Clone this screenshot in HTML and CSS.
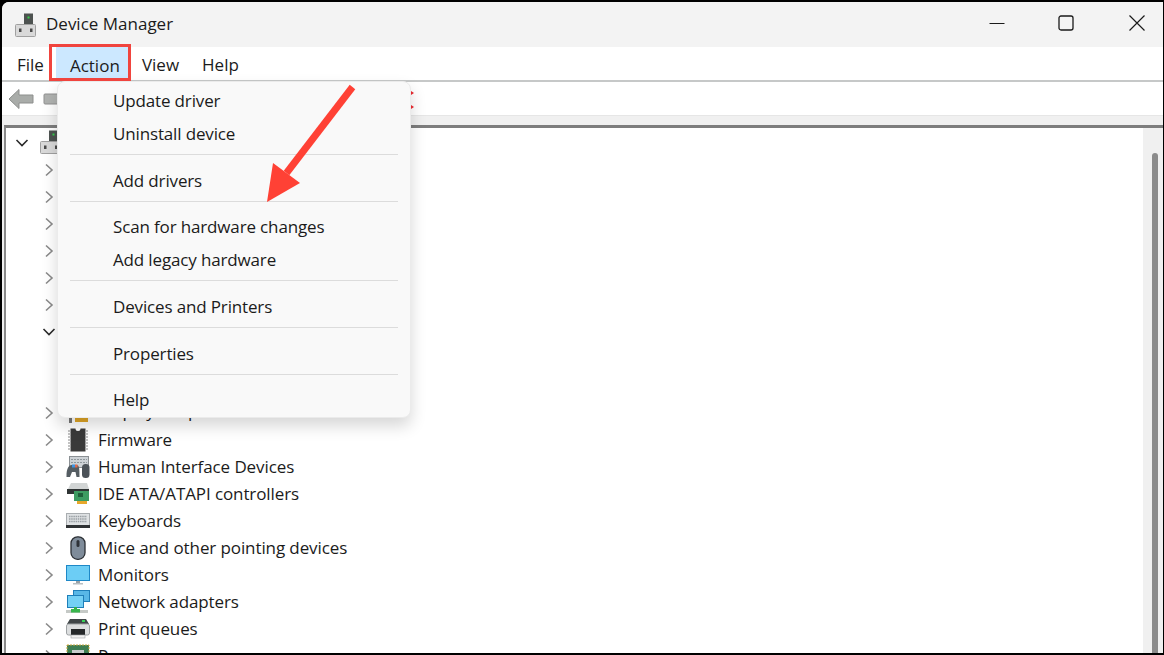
FILE: index.html
```html
<!DOCTYPE html>
<html lang="en">
<head>
<meta charset="utf-8">
<title>Device Manager</title>
<link rel="stylesheet" href="styles.css">
</head>
<body>
<svg class="defs" width="0" height="0" aria-hidden="true">
  <defs>
    <symbol id="chev" viewBox="0 0 10 14"><path d="M2 1.500 8 7 2 12.500" fill="none" stroke="#8a8a8a" stroke-width="1.600"/></symbol>
    <symbol id="chev-down" viewBox="0 0 14 10"><path d="M1.500 2 7 7.500 12.500 2" fill="none" stroke="#2b2b2b" stroke-width="1.600"/></symbol>
    <symbol id="pc" viewBox="0 0 24 24">
      <rect x="11" y="0.500" width="9" height="11" fill="#4d5250"/>
      <rect x="14.500" y="3.500" width="2" height="2" fill="#35d04a"/>
      <rect x="2.500" y="11.500" width="20" height="12" rx="1" fill="#d9d9d9" stroke="#a0a0a0"/>
      <rect x="6" y="15.500" width="2.500" height="3.500" fill="#4a4a4a"/>
      <rect x="17" y="15.500" width="2.500" height="3.500" fill="#4a4a4a"/>
    </symbol>
  </defs>
</svg>
<div class="window">
  <header class="titlebar">
    <svg class="app-icon" width="24" height="24"><use href="#pc"/></svg>
    <span class="title">Device Manager</span>
    <div class="controls">
      <span class="ctrl"><svg width="16" height="16" viewBox="0 0 16 16"><path d="M0.500 8.500h15" stroke="#1a1a1a" stroke-width="1" fill="none"/></svg></span>
      <span class="ctrl"><svg width="16" height="16" viewBox="0 0 16 16"><rect x="1" y="1" width="14" height="14" rx="2" stroke="#1a1a1a" stroke-width="1.300" fill="none"/></svg></span>
      <span class="ctrl ctrl-close"><svg width="16" height="16" viewBox="0 0 16 16"><path d="M0.500 0.500l15 15M15.500 0.500l-15 15" stroke="#1a1a1a" stroke-width="1.200" fill="none"/></svg></span>
    </div>
  </header>
  <nav class="menubar">
    <span class="menu-item">File</span>
    <span class="menu-item menu-active">Action</span>
    <span class="menu-item">View</span>
    <span class="menu-item">Help</span>
  </nav>
  <div class="toolbar">
    <svg width="26" height="22" viewBox="0 0 26 22"><path d="M1 11 11 1.500V7h14v8H11v5.500z" fill="#a9aca9" stroke="#8d8f8d"/></svg>
    <svg class="tool-fwd" width="16" height="14" viewBox="0 0 16 14"><rect x="1" y="2" width="15" height="10" rx="1" fill="#b0b2b0" stroke="#909090"/></svg>
  </div>
  <div class="toolbar-gap"></div>
  <main class="content">
    <div class="tree">
      <div class="row"><svg class="chev-root" width="14" height="10"><use href="#chev-down"/></svg><svg class="root-icon" width="24" height="24"><use href="#pc"/></svg></div>
      <div class="row child"><svg class="chev" width="10" height="14"><use href="#chev"/></svg></div>
      <div class="row child"><svg class="chev" width="10" height="14"><use href="#chev"/></svg></div>
      <div class="row child"><svg class="chev" width="10" height="14"><use href="#chev"/></svg></div>
      <div class="row child"><svg class="chev" width="10" height="14"><use href="#chev"/></svg></div>
      <div class="row child"><svg class="chev" width="10" height="14"><use href="#chev"/></svg></div>
      <div class="row child"><svg class="chev" width="10" height="14"><use href="#chev"/></svg></div>
      <div class="row child"><svg class="chev-open" width="14" height="10"><use href="#chev-down"/></svg></div>
      <div class="row"></div>
      <div class="row"></div>
      <div class="row child"><svg class="chev" width="10" height="14"><use href="#chev"/></svg>
        <svg class="icon" width="24" height="24" viewBox="0 0 24 24"><rect x="1" y="2" width="22" height="15" fill="#5c6d7a"/><rect x="3" y="17" width="3" height="5" fill="#777"/><rect x="9" y="17" width="13" height="4" fill="#e0a526"/></svg>
        <span class="label-under">Display adapters</span></div>
      <div class="row child"><svg class="chev" width="10" height="14"><use href="#chev"/></svg>
        <svg class="icon" width="24" height="24" viewBox="0 0 24 24"><path d="M4.500 0.500h5a2.500 2.500 0 0 0 5 0h5v23h-15z" fill="#3a3a3a"/><path d="M2 3h2.500M2 6h2.500M2 9h2.500M2 12h2.500M2 15h2.500M2 18h2.500M2 21h2.500M19.500 3H22M19.500 6H22M19.500 9H22M19.500 12H22M19.500 15H22M19.500 18H22M19.500 21H22" stroke="#b0b0b0" stroke-width="1.500"/></svg>
        <span>Firmware</span></div>
      <div class="row child"><svg class="chev" width="10" height="14"><use href="#chev"/></svg>
        <svg class="icon" width="24" height="24" viewBox="0 0 24 24"><rect x="3.500" y="1.500" width="19" height="11" fill="#cdd2d6" stroke="#8b9094"/><path d="M5 4.500h16M5 7.500h16" stroke="#8f979c" stroke-dasharray="2 1"/><path d="M0.500 21c0-7 2-11 5-11h5c3 0 3 4 3 12h-3l-1-5H6l-2 5H0.500z" fill="#555d63"/><rect x="6" y="9.500" width="3" height="3" fill="#3f93e0"/><rect x="9" y="9.500" width="2.500" height="3" fill="#e06a4a"/><rect x="16" y="9" width="7.500" height="14" rx="3.500" fill="#4b5258"/></svg>
        <span>Human Interface Devices</span></div>
      <div class="row child"><svg class="chev" width="10" height="14"><use href="#chev"/></svg>
        <svg class="icon" width="24" height="24" viewBox="0 0 24 24"><path d="M5 1h16l2 6H2z" fill="#d2d5d5"/><rect x="1" y="7" width="22" height="5" fill="#2f3434"/><rect x="8" y="9" width="15" height="10" fill="#3d9c62"/><rect x="12" y="11" width="5" height="4" fill="#1e5f3a"/><rect x="11" y="19" width="10" height="3" fill="#e7a82b"/></svg>
        <span>IDE ATA/ATAPI controllers</span></div>
      <div class="row child"><svg class="chev" width="10" height="14"><use href="#chev"/></svg>
        <svg class="icon" width="24" height="24" viewBox="0 0 24 24"><rect x="0.500" y="4.500" width="23" height="13" fill="#dfe2e4" stroke="#a9adb0"/><path d="M3 7.500h18M3 10h18M3 12.500h18" stroke="#9aa0a4" stroke-width="1.300" stroke-dasharray="1.500 .7"/><rect x="0" y="16" width="24" height="3" fill="#2f3234"/></svg>
        <span>Keyboards</span></div>
      <div class="row child"><svg class="chev" width="10" height="14"><use href="#chev"/></svg>
        <svg class="icon" width="24" height="24" viewBox="0 0 24 24"><rect x="5" y="0.800" width="14" height="22.500" rx="6.500" fill="#7f8c9a" stroke="#2d3136" stroke-width="1.300"/><rect x="10.500" y="4" width="3" height="7" rx="1.500" fill="#2e3238"/></svg>
        <span>Mice and other pointing devices</span></div>
      <div class="row child"><svg class="chev" width="10" height="14"><use href="#chev"/></svg>
        <svg class="icon" width="24" height="24" viewBox="0 0 24 24"><rect x="0.500" y="2.500" width="23" height="15" fill="#6ccdf5" stroke="#1e88c7"/><rect x="10" y="18" width="4" height="2" fill="#9aa2a8"/><rect x="7" y="20" width="10" height="1.500" fill="#b8bec2"/></svg>
        <span>Monitors</span></div>
      <div class="row child"><svg class="chev" width="10" height="14"><use href="#chev"/></svg>
        <svg class="icon" width="24" height="24" viewBox="0 0 24 24"><rect x="7.500" y="0.500" width="16" height="11" fill="#58b7e6" stroke="#1f7fb9"/><rect x="1.500" y="5.500" width="16" height="12" fill="#74d0f5" stroke="#1f7fb9"/><path d="M8 17h3v3h-3z" fill="#35b04a"/><rect x="0" y="20" width="22" height="3" fill="#c5c9c6"/><rect x="5" y="19" width="9" height="3.500" fill="#38b54c"/></svg>
        <span>Network adapters</span></div>
      <div class="row child"><svg class="chev" width="10" height="14"><use href="#chev"/></svg>
        <svg class="icon" width="24" height="24" viewBox="0 0 24 24"><path d="M4 2h16l3 5H1z" fill="#3f4547"/><rect x="16" y="3" width="3" height="2" fill="#37d057"/><rect x="0.500" y="7" width="23" height="11" rx="2" fill="#dcdedf" stroke="#9ea2a4"/><rect x="5" y="12" width="14" height="6" fill="#25282a"/><rect x="5" y="18" width="14" height="3" fill="#f1f1f1" stroke="#9ea2a4" stroke-width=".6"/></svg>
        <span>Print queues</span></div>
      <div class="row child"><svg class="chev" width="10" height="14"><use href="#chev"/></svg>
        <svg class="icon" width="24" height="24" viewBox="0 0 24 24"><rect x="1" y="1" width="22" height="22" fill="#3e7d52" stroke="#c9a53b" stroke-dasharray="2 1"/><rect x="6" y="6" width="12" height="12" fill="#c8cccc"/></svg>
        <span>Processors</span></div>
    </div>
    <div class="scrollbar"><div class="thumb"></div></div>
  </main>
</div>

<div class="popup">
  <div class="popup-item">Update driver</div>
  <div class="popup-item">Uninstall device</div>
  <div class="sep"></div>
  <div class="popup-item">Add drivers</div>
  <div class="sep"></div>
  <div class="popup-item">Scan for hardware changes</div>
  <div class="popup-item">Add legacy hardware</div>
  <div class="sep"></div>
  <div class="popup-item">Devices and Printers</div>
  <div class="sep"></div>
  <div class="popup-item">Properties</div>
  <div class="sep"></div>
  <div class="popup-item">Help</div>
</div>
<div class="redbox"></div>
<svg class="peek" width="5" height="20" viewBox="0 0 5 20"><path d="M0 1l3 2-3 2zM0 15l3 2-3 2z" fill="#e0262c"/></svg>
<svg class="arrow" width="100" height="124" viewBox="0 0 100 124">
  <path d="M86.500 7 20.500 93" stroke="#ff4135" stroke-width="7" fill="none"/>
  <path d="M1 122 7 83 34 103z" fill="#ff4135"/>
</svg>
</body>
</html>
```
FILE: styles.css
```css
* { box-sizing: border-box; }
html, body { margin: 0; height: 100%; }
body {
  width: 1164px;
  height: 655px;
  overflow: hidden;
  position: relative;
  background: #000;
  padding: 2px 1px 2px 2px;
  font-family: "Open Sans", "Noto Sans", sans-serif;
  font-size: 17px;
  color: #1b1b1b;
}
.defs { position: absolute; }
.window {
  height: 100%;
  display: flex;
  flex-direction: column;
  background: #fff;
  border-top-left-radius: 7px;
  overflow: hidden;
}
.titlebar {
  height: 45px;
  flex: none;
  display: flex;
  align-items: center;
  background: #f3f3f3;
  padding-left: 11px;
}
.app-icon { flex: none; }
.title { margin-left: 9px; margin-top: -2px; }
.controls { margin-left: auto; display: flex; margin-top: -3px; }
.ctrl { width: 69px; display: flex; justify-content: center; }
.ctrl-close { width: 34px; margin-left: 29px; justify-content: flex-start; }
.menubar {
  height: 35px;
  flex: none;
  display: flex;
  align-items: center;
  background: #fff;
  border-bottom: 2px solid #c6c8c8;
  padding-left: 15px;
}
.menu-item { padding-top: 2px; margin-right: 23px; }
.menu-item:first-child { margin-right: 24px; }
.menu-active {
  align-self: stretch;
  display: flex;
  align-items: center;
  width: 72px;
  background: #cce8ff;
  padding: 3px 0 0 14px;
  margin: 0 14px 0 -12px;
}
.toolbar {
  height: 33px;
  flex: none;
  display: flex;
  align-items: center;
  padding-left: 6px;
  gap: 9px;
  background: #fff;
}
.tool-fwd { margin-top: 1px; }
.toolbar-gap {
  height: 10px;
  flex: none;
  background: #f0f0f0;
  border-top: 1px solid #e6e6e6;
}
.content {
  flex: 1;
  min-height: 0;
  display: flex;
  background: #f0f0f0;
  padding-left: 2px;
}
.tree {
  flex: 1;
  min-width: 0;
  background: #fff;
  border-top: 3px solid #7d7d7d;
  border-left: 2px solid #8a8a8a;
  padding-top: 1px;
  overflow: hidden;
  letter-spacing: -0.1px;
}
.row {
  height: 27px;
  display: flex;
  align-items: center;
  white-space: nowrap;
}
.chev-root { margin-left: 9px; margin-right: 9px; }
.root-icon { flex: none; margin-top: -1px; }
.child { padding-left: 38px; }
.chev { flex: none; }
.chev-open { flex: none; margin-left: -2px; }
.icon { flex: none; margin-left: 12px; margin-right: 8px; }
.label-under { margin-bottom: 4px; }
.scrollbar {
  width: 20px;
  flex: none;
  background: #f0f0f0;
  border-top: 3px solid #7d7d7d;
  padding: 25px 5px 0 9px;
}
.thumb { height: 100%; background: #8b8b8b; border-radius: 3px 3px 0 0; }
.popup {
  position: absolute;
  left: 57px;
  top: 81px;
  width: 354px;
  height: 337px;
  padding: 3px 12px 0;
  background: #f9f9f9;
  border: 1px solid #ebebeb;
  border-radius: 8px;
  box-shadow: 0 8px 16px rgba(0,0,0,.16);
  letter-spacing: -0.15px;
}
.popup-item { height: 33px; line-height: 32px; padding-left: 43px; white-space: nowrap; }
.sep { height: 13.67px; padding-top: 3px; }
.sep::before { content: ""; display: block; height: 1px; background: #dcdcdc; }
.redbox {
  position: absolute;
  left: 49px;
  top: 44px;
  width: 82px;
  height: 37px;
  border: 3px solid #f0443e;
}
.peek { position: absolute; left: 411px; top: 90px; }
.arrow { position: absolute; left: 266px; top: 80px; }
```
